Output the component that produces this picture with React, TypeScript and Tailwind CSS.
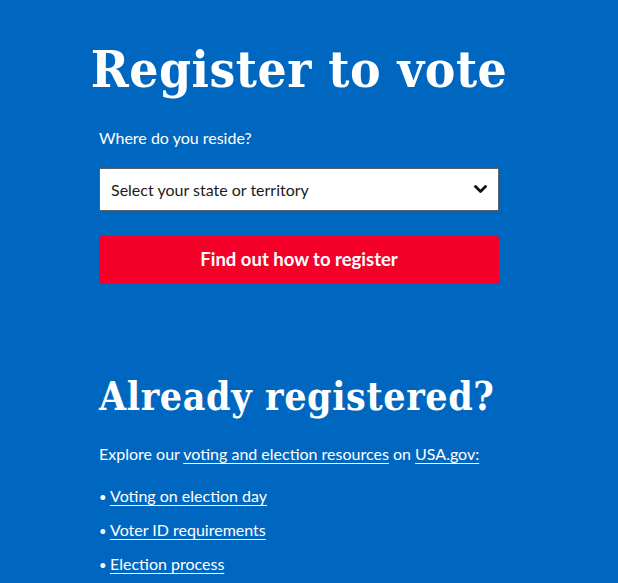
import React from 'react'

const serif = { fontFamily: '"DejaVu Serif", "Liberation Serif", serif' }

const resources = ['Voting on election day', 'Voter ID requirements', 'Election process']

export default function App() {
  return (
    <div className="min-h-[583px] w-full overflow-hidden bg-[#0067c0] font-['Lato','Open_Sans',sans-serif] text-white">
      <div className="ml-[99px] w-[400px] pt-[40px]">
        <h1
          style={serif}
          className="-mx-10 whitespace-nowrap text-center text-[51px] font-bold leading-[58px] tracking-[0.5px] [font-stretch:condensed]"
        >
          Register to vote
        </h1>

        <form className="mt-[28px]" onSubmit={(e) => e.preventDefault()}>
          <label htmlFor="state" className="block text-[16px] leading-[24px]">
            Where do you reside?
          </label>
          <div className="relative mt-[18px]">
            <select
              id="state"
              className="h-[43px] w-full appearance-none rounded-none border border-[#5b6168] bg-white pl-[11px] text-[16px] text-[#1b1b1b]"
            >
              <option>Select your state or territory</option>
            </select>
            <svg
              className="pointer-events-none absolute right-[12px] top-[17px]"
              width="13"
              height="9"
              viewBox="0 0 13 9"
              fill="none"
            >
              <path d="M1.5 1.5 L6.5 6.5 L11.5 1.5" stroke="#111" strokeWidth="2.8" strokeLinecap="round" strokeLinejoin="round" />
            </svg>
          </div>
          <button
            type="submit"
            className="mt-[25px] h-[48px] w-full rounded-[3px] bg-[#f40029] text-[18.5px] font-bold text-white"
          >
            Find out how to register
          </button>
        </form>

        <h2
          style={serif}
          className="mt-[89px] whitespace-nowrap text-[39px] font-bold leading-[46px] tracking-[0.6px] [font-stretch:condensed]"
        >
          Already registered?
        </h2>

        <p className="mt-[23px] text-[16px] leading-[24px]">
          Explore our{' '}
          <a href="#" className="underline underline-offset-[3px]">
            voting and election resources
          </a>{' '}
          on{' '}
          <a href="#" className="underline underline-offset-[3px]">
            USA.gov:
          </a>
        </p>

        <ul className="mt-[18px] space-y-[9px]">
          {resources.map((item) => (
            <li key={item} className="flex items-baseline text-[16px] leading-[24px]">
              <span className="w-[11px] shrink-0 text-[13px]">•</span>
              <a href="#" className="underline underline-offset-[3px]">
                {item}
              </a>
            </li>
          ))}
        </ul>
      </div>
    </div>
  )
}
